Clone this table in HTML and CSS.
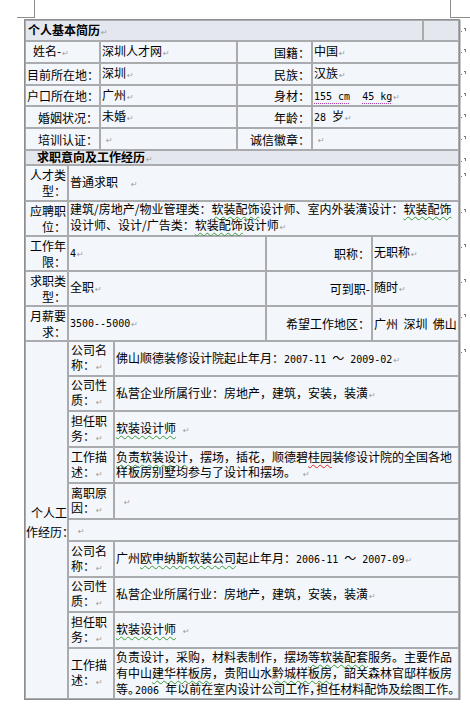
FILE: index.html
```html
<!DOCTYPE html>
<html lang="zh-CN">
<head>
<meta charset="utf-8">
<title>个人基本简历</title>
<link rel="stylesheet" href="styles.css">
</head>
<body>
<div class="marks"><div class="mk-l"></div><div class="mk-r"></div></div>
<div class="sheet">
  <div class="grid g-h1">
    <div class="c h t1"><span>个人基本简历<span class="p">↵</span></span></div>
    <div class="c h e"></div>
  </div>
  <div class="grid g-a">
    <div class="c name"><span>姓名-<span class="p">↵</span></span></div>
    <div class="c v"><span>深圳人才网<span class="p">↵</span></span></div>
    <div class="c lb"><span>国籍：</span></div>
    <div class="c v e"><span>中国<span class="p">↵</span></span></div>

    <div class="c lb0"><span>目前所在地：</span></div>
    <div class="c v"><span>深圳<span class="p">↵</span></span></div>
    <div class="c lb"><span>民族：</span></div>
    <div class="c v e"><span>汉族<span class="p">↵</span></span></div>

    <div class="c lb0"><span>户口所在地：</span></div>
    <div class="c v"><span>广州<span class="p">↵</span></span></div>
    <div class="c lb"><span>身材：</span></div>
    <div class="c v e"><span><span class="l m">155 cm</span><span class="l">&nbsp;&nbsp;</span><span class="l m">45 kg</span><span class="p">↵</span></span></div>

    <div class="c lb"><span>婚姻状况：</span></div>
    <div class="c v"><span>未婚<span class="p">↵</span></span></div>
    <div class="c lb"><span>年龄：</span></div>
    <div class="c v e"><span><span class="l">28&nbsp;</span>岁<span class="p">↵</span></span></div>

    <div class="c lb"><span>培训认证：</span></div>
    <div class="c v sp"><span><span class="p">↵</span></span></div>
    <div class="c lb"><span>诚信徽章：</span></div>
    <div class="c v sp e"><span><span class="p">↵</span></span></div>
  </div>

  <div class="grid g-h2">
    <div class="c h t2 e"><span>求职意向及工作经历<span class="p">↵</span></span></div>
  </div>
  <div class="grid g-b">
    <div class="c lb"><span>人才类<br>型：</span></div>
    <div class="c v span3 e"><span>普通求职<span class="p gap">↵</span></span></div>

    <div class="c lb"><span>应聘职<br>位：</span></div>
    <div class="c v span3 e"><span>建筑/房地产/物业管理类：<span class="g">软装配饰</span>设计师、室内外装潢设计：<span class="g">软装配饰</span><br>设计师、设计/广告类：<span class="g">软装配饰</span>设计师<span class="p">↵</span></span></div>

    <div class="c lb"><span>工作年<br>限：</span></div>
    <div class="c v"><span><span class="l">4</span><span class="p">↵</span></span></div>
    <div class="c lb"><span>职称：</span></div>
    <div class="c v e"><span>无职称<span class="p">↵</span></span></div>

    <div class="c lb"><span>求职类<br>型：</span></div>
    <div class="c v"><span>全职<span class="p">↵</span></span></div>
    <div class="c lb"><span>可到职-</span></div>
    <div class="c v e"><span>随时<span class="p">↵</span></span></div>

    <div class="c lb"><span>月薪要<br>求：</span></div>
    <div class="c v"><span><span class="l">3500--5000</span><span class="p">↵</span></span></div>
    <div class="c lb"><span>希望工作地区：</span></div>
    <div class="c v e"><span>广州&nbsp; 深圳&nbsp; 佛山</span></div>
  </div>

  <div class="grid g-c">
    <div class="c side"><span>个人工<br>作经历<span class="hang">：</span></span></div>

    <div class="c k"><span>公司名<br>称：<span class="p">↵</span></span></div>
    <div class="c v e"><span>佛山顺德装修设计院起止年月：<span class="l">2007-11&nbsp;</span>～<span class="l">&nbsp;2009-02</span><span class="p">↵</span></span></div>

    <div class="c k"><span>公司性<br>质：<span class="p">↵</span></span></div>
    <div class="c v"><span>私营企业所属行业：房地产，建筑，安装，装潢<span class="p">↵</span></span></div>

    <div class="c k"><span>担任职<br>务：<span class="p">↵</span></span></div>
    <div class="c v"><span><span class="g">软装设计师</span><span class="p gap2">↵</span></span></div>

    <div class="c k"><span>工作描<br>述：<span class="p">↵</span></span></div>
    <div class="c v"><span><span class="g">负责软装设计</span>，摆场，插花，顺德碧<span class="r">桂园</span>装修设计院的全国各地<br>样板房别墅均参与了设计和摆场。<span class="p gap2">↵</span></span></div>

    <div class="c k"><span>离职原<br>因：<span class="p">↵</span></span></div>
    <div class="c v sp2"><span><span class="p">↵</span></span></div>

    <div class="c v span2 sp3"><span><span class="p">↵</span></span></div>

    <div class="c k"><span>公司名<br>称：<span class="p">↵</span></span></div>
    <div class="c v"><span>广州<span class="g">欧申纳斯软装公司</span>起止年月：<span class="l">2006-11&nbsp;</span>～<span class="l">&nbsp;2007-09</span><span class="p">↵</span></span></div>

    <div class="c k"><span>公司性<br>质：<span class="p">↵</span></span></div>
    <div class="c v"><span>私营企业所属行业：房地产，建筑，安装，装潢<span class="p">↵</span></span></div>

    <div class="c k"><span>担任职<br>务：<span class="p">↵</span></span></div>
    <div class="c v"><span><span class="g">软装设计师</span><span class="p gap2">↵</span></span></div>

    <div class="c k"><span>工作描<br>述：<span class="p">↵</span></span></div>
    <div class="c v lh16"><span>负责设计，采购，材料表制作，摆场<span class="g">等软装配套</span>服务。主要作品<br>有中山<span class="g">建华样板房</span>，贵阳山水<span class="g">黔城样板房</span>，韶关森林官邸样板房<br>等<span class="cp">。</span><span class="l">2006&nbsp;</span>年以前在室内设计公司工作<span class="cp">，</span>担任材料配饰及绘图工作。</span></div>
  </div>
</div>
</body>
</html>
```

FILE: styles.css
```css
html, body {
  margin: 0;
  padding: 0;
  background: #ffffff;
}
body {
  width: 470px;
  font-family: "Noto Sans CJK SC", "Noto Sans", sans-serif;
  font-size: 12px;
  color: #000;
}
.marks {
  display: flex;
  justify-content: space-between;
  padding-left: 17px;
  height: 18px;
}
.mk-l {
  width: 18px;
  height: 18px;
  box-sizing: border-box;
  border-right: 1px solid #8c8c8c;
  border-bottom: 1px solid #8c8c8c;
}
.mk-r {
  width: 20px;
  height: 18px;
  box-sizing: border-box;
  border-left: 1px solid #8c8c8c;
  border-bottom: 1px solid #8c8c8c;
}
.sheet {
  margin: 1px 0 0 24px;
  width: 436px;
  box-sizing: border-box;
  border: 1px solid #8e8e8e;
  box-shadow: 1px 1px 0 #c9c9c9;
}
.grid {
  display: grid;
}
.g-h1 {
  grid-template-columns: 398px 36px;
  grid-template-rows: 21px;
}
.g-a {
  grid-template-columns: 75px 137px 75px 147px;
  grid-template-rows: 22px 22px 21px 22px 22px;
}
.g-h2 {
  grid-template-columns: 434px;
  grid-template-rows: 15px;
}
.g-b {
  grid-template-columns: 43px 198px 106px 87px;
  grid-template-rows: 36px 35px 35px 35px 35px;
  line-height: 16px;
}
.g-c {
  grid-template-columns: 43px 46px 345px;
  grid-template-rows: 35px 35px 36px 36px 36px 22px 36px 35px 36px 51px;
  line-height: 15px;
}
.c {
  position: relative;
  display: flex;
  align-items: center;
  border: 1px solid #a9abaf;
  background: #f3f6fa;
  white-space: nowrap;
  min-width: 0;
}
.g-h1 .c, .g-a .c {
  line-height: 15px;
}
.h {
  background: #e4e8ee;
  font-weight: bold;
}
.t1 {
  padding-left: 2px;
}
.t2 {
  padding-left: 11px;
  line-height: 13px;
}
.name {
  padding-left: 7px;
}
.lb {
  justify-content: flex-end;
  text-align: right;
  padding-right: 1px;
}
.lb0 {
  padding-left: 1px;
}
.v {
  padding-left: 1px;
}
.sp {
  padding-left: 4px;
}
.sp2 {
  padding-left: 8px;
}
.sp3 {
  padding-left: 8px;
}
.k {
  padding-left: 2px;
}
.span3 {
  grid-column: span 3;
}
.span2 {
  grid-column: span 2;
}
.side {
  grid-row: 1 / -1;
  justify-content: flex-end;
  text-align: right;
  line-height: 19px;
  padding-top: 4px;
}
.hang {
  margin-right: -7px;
}
.cp {
  margin-right: -5px;
}
.lh16 {
  line-height: 16px;
}
.p {
  font-family: "DejaVu Sans", sans-serif;
  font-size: 8px;
  color: #9c9c9c;
  font-weight: normal;
  margin-left: 1px;
}
.gap {
  margin-left: 13px;
}
.gap2 {
  margin-left: 7px;
}
.l {
  font-family: "DejaVu Sans Mono", "Liberation Mono", monospace;
  font-size: 10px;
}
.g {
  text-decoration: underline wavy #3a9a3a;
  text-decoration-thickness: 1px;
  text-underline-offset: 2px;
}
.r {
  text-decoration: underline wavy #e02828;
  text-decoration-thickness: 1px;
  text-underline-offset: 2px;
}
.m {
  text-decoration: underline dotted #b040b0;
  text-underline-offset: 3px;
}
.e::after {
  content: "";
  position: absolute;
  left: calc(100% + 3px);
  top: 10px;
  width: 1px;
  height: 1px;
  background: #7a7a7a;
  box-shadow: 3px -3px 0 #7a7a7a, 4px -3px 0 #7a7a7a, 4px -2px 0 #7a7a7a, 4px -1px 0 #7a7a7a;
}
```
